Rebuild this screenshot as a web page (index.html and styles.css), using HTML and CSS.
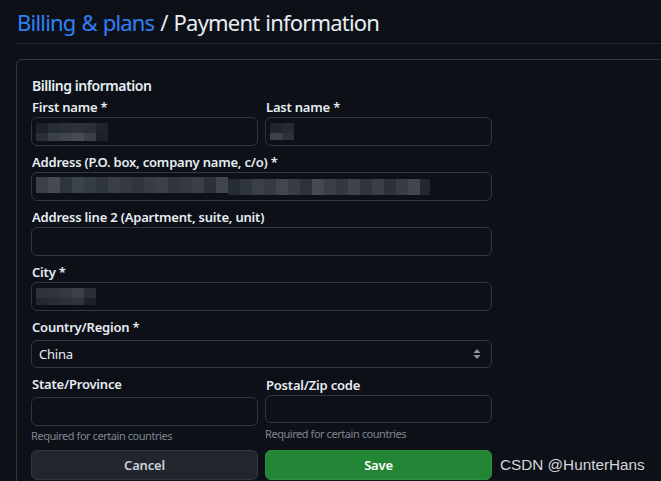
FILE: index.html
```html
<!DOCTYPE html>
<html>
<head>
<meta charset="utf-8">
<link rel="stylesheet" href="styles.css">
</head>
<body>
<div class="page">
  <h1 class="title"><a class="crumb">Billing &amp; plans</a> / Payment information</h1>
  <div class="box">
    <h2 class="heading">Billing information</h2>
    <div class="row">
      <div class="field">
        <label class="label">First name *</label>
        <div class="input">
          <svg class="mosaic" width="80" height="22" viewBox="0 0 80 22">
            <rect x="0" y="2" width="12" height="10" fill="#1c232b"/>
            <rect x="12" y="2" width="12" height="10" fill="#262d35"/>
            <rect x="24" y="2" width="12" height="10" fill="#2a3038"/>
            <rect x="36" y="2" width="12" height="10" fill="#2d3239"/>
            <rect x="48" y="2" width="12" height="10" fill="#2b3037"/>
            <rect x="60" y="2" width="12" height="10" fill="#1f242b"/>
            <rect x="0" y="12" width="12" height="8" fill="#2a3038"/>
            <rect x="12" y="12" width="12" height="8" fill="#3a4047"/>
            <rect x="24" y="12" width="12" height="8" fill="#40464c"/>
            <rect x="36" y="12" width="12" height="8" fill="#474c52"/>
            <rect x="48" y="12" width="12" height="8" fill="#3a3f45"/>
            <rect x="60" y="12" width="12" height="8" fill="#1c2128"/>
          </svg>
        </div>
      </div>
      <div class="field">
        <label class="label">Last name *</label>
        <div class="input">
          <svg class="mosaic" width="40" height="22" viewBox="0 0 40 22">
            <rect x="0" y="2" width="12" height="10" fill="#1e252c"/>
            <rect x="12" y="2" width="12" height="10" fill="#232a31"/>
            <rect x="0" y="12" width="12" height="7" fill="#3c4248"/>
            <rect x="12" y="12" width="12" height="7" fill="#2c3238"/>
          </svg>
        </div>
      </div>
    </div>
    <div class="field">
      <label class="label">Address (P.O. box, company name, c/o) *</label>
      <div class="input">
        <svg class="mosaic" width="420" height="24" viewBox="0 0 420 24">
          <rect x="0" y="2" width="12" height="16" fill="#3a4047"/>
          <rect x="12" y="2" width="12" height="16" fill="#454b51"/>
          <rect x="24" y="2" width="12" height="16" fill="#2e343b"/>
          <rect x="36" y="2" width="12" height="16" fill="#3b4448"/>
          <rect x="48" y="2" width="12" height="16" fill="#353c42"/>
          <rect x="60" y="2" width="12" height="16" fill="#30363d"/>
          <rect x="72" y="2" width="12" height="16" fill="#3a3f46"/>
          <rect x="84" y="2" width="12" height="16" fill="#363b41"/>
          <rect x="96" y="2" width="12" height="16" fill="#2f353b"/>
          <rect x="108" y="2" width="12" height="16" fill="#373c42"/>
          <rect x="120" y="2" width="12" height="16" fill="#3c4147"/>
          <rect x="132" y="2" width="12" height="16" fill="#31363d"/>
          <rect x="144" y="2" width="12" height="16" fill="#353a40"/>
          <rect x="156" y="2" width="12" height="16" fill="#3a3f46"/>
          <rect x="168" y="2" width="12" height="16" fill="#2c3137"/>
          <rect x="180" y="2" width="12" height="16" fill="#40464c"/>
          <rect x="192" y="4" width="12" height="16" fill="#262c33"/>
          <rect x="204" y="4" width="12" height="16" fill="#2f353c"/>
          <rect x="216" y="4" width="12" height="16" fill="#3b4047"/>
          <rect x="228" y="4" width="12" height="16" fill="#363b41"/>
          <rect x="240" y="4" width="12" height="16" fill="#42474d"/>
          <rect x="252" y="4" width="12" height="16" fill="#383d43"/>
          <rect x="264" y="4" width="12" height="16" fill="#2d3238"/>
          <rect x="276" y="4" width="12" height="16" fill="#454a50"/>
          <rect x="288" y="4" width="12" height="16" fill="#3a3f45"/>
          <rect x="300" y="4" width="12" height="16" fill="#33383e"/>
          <rect x="312" y="4" width="12" height="16" fill="#3f444a"/>
          <rect x="324" y="4" width="12" height="16" fill="#30353b"/>
          <rect x="336" y="4" width="12" height="16" fill="#3a3f45"/>
          <rect x="348" y="4" width="12" height="16" fill="#2c3137"/>
          <rect x="360" y="4" width="12" height="16" fill="#383d43"/>
          <rect x="372" y="4" width="12" height="16" fill="#41464c"/>
          <rect x="384" y="4" width="10" height="16" fill="#22272e"/>
        </svg>
      </div>
    </div>
    <div class="field">
      <label class="label">Address line 2 (Apartment, suite, unit)</label>
      <div class="input"></div>
    </div>
    <div class="field">
      <label class="label">City *</label>
      <div class="input">
        <svg class="mosaic" width="64" height="22" viewBox="0 0 64 22">
          <rect x="0" y="2" width="12" height="10" fill="#2c3238"/>
          <rect x="12" y="2" width="12" height="10" fill="#2f353b"/>
          <rect x="24" y="2" width="12" height="10" fill="#33393f"/>
          <rect x="36" y="2" width="12" height="10" fill="#3a4046"/>
          <rect x="48" y="2" width="12" height="10" fill="#2a2f35"/>
          <rect x="0" y="12" width="12" height="7" fill="#23292f"/>
          <rect x="12" y="12" width="12" height="7" fill="#272d33"/>
          <rect x="24" y="12" width="12" height="7" fill="#2c3238"/>
          <rect x="36" y="12" width="12" height="7" fill="#2f353b"/>
          <rect x="48" y="12" width="12" height="7" fill="#1c2127"/>
        </svg>
      </div>
    </div>
    <div class="field field-country">
      <label class="label">Country/Region *</label>
      <div class="input select">
        <span class="select-text">China</span>
        <svg class="caret" width="8" height="12" viewBox="0 0 8 12">
          <path d="M4 1 L7.5 5 L0.5 5 Z M4 11 L7.5 7 L0.5 7 Z" fill="#8b949e"/>
        </svg>
      </div>
    </div>
    <div class="row row-last">
      <div class="field">
        <label class="label">State/Province</label>
        <div class="input"></div>
        <p class="note">Required for certain countries</p>
      </div>
      <div class="field field-zip">
        <label class="label">Postal/Zip code</label>
        <div class="input"></div>
        <p class="note">Required for certain countries</p>
      </div>
    </div>
    <div class="row buttons">
      <button class="btn btn-cancel">Cancel</button>
      <button class="btn btn-save">Save</button>
    </div>
  </div>
  <div class="watermark">CSDN @HunterHans</div>
</div>
</body>
</html>
```
FILE: styles.css
```css
html, body {
  margin: 0;
  padding: 0;
  background: #0d1117;
  overflow: hidden;
}
body {
  font-family: "Noto Sans", "Open Sans", sans-serif;
  color: #e6edf3;
}
.page {
  position: relative;
  width: 661px;
  height: 481px;
  overflow: hidden;
  padding-left: 16px;
  box-sizing: border-box;
}
.title {
  margin: 0;
  padding: 6px 0 5px 1px;
  font-size: 22px;
  font-weight: 400;
  line-height: 32px;
  color: #e6edf3;
  border-bottom: 1px solid #21262d;
  letter-spacing: -0.8px;
  word-spacing: 1px;
  white-space: nowrap;
}
.crumb {
  color: #2f81f7;
}
.box {
  margin-top: 15px;
  width: 720px;
  border: 1px solid #30363d;
  border-radius: 6px;
  padding: 16px 14px 0 14px;
  height: 500px;
  box-sizing: border-box;
}
.heading {
  margin: 0 0 2px 1px;
  font-size: 14px;
  font-weight: 600;
  line-height: 20px;
  letter-spacing: -0.45px;
}
.row {
  display: flex;
  gap: 7px;
  width: 461px;
}
.row .field {
  flex: 1;
}
.field {
  width: 461px;
  margin-bottom: 7px;
}
.label {
  display: block;
  margin-left: 1px;
  font-size: 13px;
  font-weight: 600;
  line-height: 19px;
  letter-spacing: -0.2px;
  white-space: nowrap;
}
.input {
  height: 29px;
  box-sizing: border-box;
  border: 1px solid #30363d;
  border-radius: 6px;
  background: #0d1117;
  display: flex;
  align-items: center;
  padding-left: 4px;
}
.mosaic {
  display: block;
}
.field-country .label {
  margin-bottom: 3px;
}
.select {
  height: 28px;
  padding: 0 10px 0 7px;
  justify-content: space-between;
}
.select-text {
  font-size: 13px;
  color: #e6edf3;
  letter-spacing: -0.2px;
}
.row-last .label {
  margin-bottom: 3px;
}
.row-last .field {
  margin-bottom: 6px;
}
.field-zip .label {
  margin-top: 1px;
  margin-bottom: 0;
}
.field-zip .input {
  height: 28px;
}
.note {
  margin: 2px 0 0 0;
  font-size: 11px;
  line-height: 16px;
  color: #7d8590;
  letter-spacing: -0.45px;
  white-space: nowrap;
}
.field-zip .note {
  margin-top: 3px;
}
.buttons {
  gap: 7px;
}
.btn {
  flex: 1;
  height: 30px;
  border-radius: 6px;
  font-family: "Noto Sans", "Open Sans", sans-serif;
  font-size: 13px;
  font-weight: 600;
  letter-spacing: -0.2px;
  padding: 0;
}
.btn-cancel {
  background: #21262d;
  color: #c9d1d9;
  border: 1px solid #30363d;
}
.btn-save {
  background: #238636;
  color: #ffffff;
  border: 1px solid #2a903b;
}
.watermark {
  position: absolute;
  left: 500px;
  top: 455px;
  font-family: "Liberation Sans", Arial, sans-serif;
  font-size: 15.3px;
  line-height: 20px;
  color: #d4d6d9;
  white-space: nowrap;
}
```
